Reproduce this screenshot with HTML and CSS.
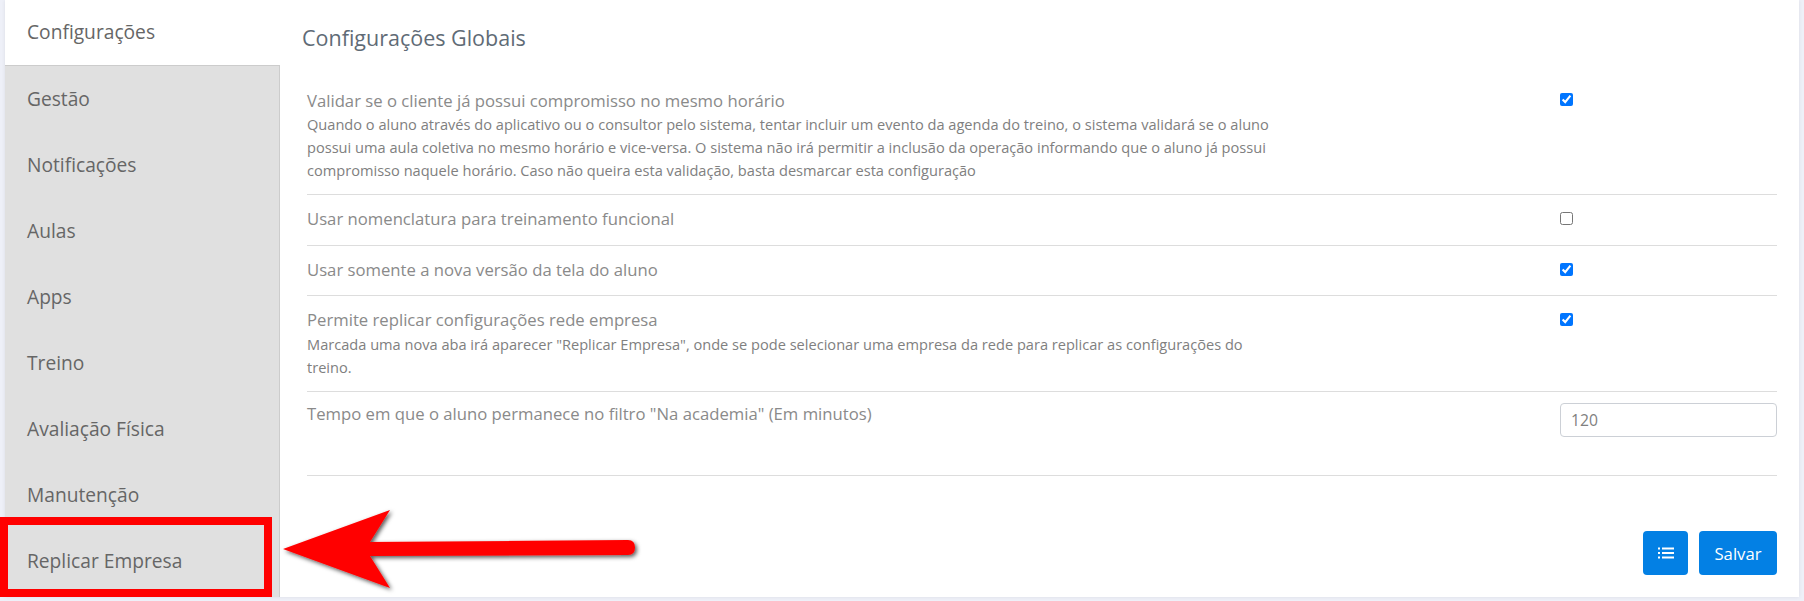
FILE: index.html
```html
<!DOCTYPE html>
<html>
<head>
  <title>Configurações</title>
  <link rel="stylesheet" href="styles.css">
</head>
<body>
  <div class="card">
    <nav class="sidebar">
      <a class="tab active">Configurações</a>
      <a class="tab">Gestão</a>
      <a class="tab">Notificações</a>
      <a class="tab">Aulas</a>
      <a class="tab">Apps</a>
      <a class="tab">Treino</a>
      <a class="tab">Avaliação Física</a>
      <a class="tab">Manutenção</a>
      <a class="tab">Replicar Empresa</a>
    </nav>

    <main class="content">
      <h2 class="title">Configurações Globais</h2>

      <div class="row row-first">
        <div class="row-text">
          <div class="label">Validar se o cliente já possui compromisso no mesmo horário</div>
          <p class="desc">Quando o aluno através do aplicativo ou o consultor pelo sistema, tentar incluir um evento da agenda do treino, o sistema validará se o aluno<br>possui uma aula coletiva no mesmo horário e vice-versa. O sistema não irá permitir a inclusão da operação informando que o aluno já possui<br>compromisso naquele horário. Caso não queira esta validação, basta desmarcar esta configuração</p>
        </div>
        <div class="row-control"><input type="checkbox" checked></div>
      </div>

      <div class="row row-second">
        <div class="row-text">
          <div class="label">Usar nomenclatura para treinamento funcional</div>
        </div>
        <div class="row-control"><input type="checkbox"></div>
      </div>

      <div class="row">
        <div class="row-text">
          <div class="label">Usar somente a nova versão da tela do aluno</div>
        </div>
        <div class="row-control"><input type="checkbox" checked></div>
      </div>

      <div class="row">
        <div class="row-text">
          <div class="label">Permite replicar configurações rede empresa</div>
          <p class="desc">Marcada uma nova aba irá aparecer "Replicar Empresa", onde se pode selecionar uma empresa da rede para replicar as configurações do<br>treino.</p>
        </div>
        <div class="row-control"><input type="checkbox" checked></div>
      </div>

      <div class="row row-last">
        <div class="row-text">
          <div class="label">Tempo em que o aluno permanece no filtro "Na academia" (Em minutos)</div>
        </div>
        <div class="row-control"><input class="number" type="text" value="120"></div>
      </div>

      <div class="actions">
        <button class="btn btn-icon" type="button">
          <svg width="16" height="12" viewBox="0 0 16 12" fill="#fff">
            <rect x="0" y="0.5" width="2" height="2"/>
            <rect x="0" y="5" width="2" height="2"/>
            <rect x="0" y="9.5" width="2" height="2"/>
            <rect x="4" y="0.5" width="12" height="2"/>
            <rect x="4" y="5" width="12" height="2"/>
            <rect x="4" y="9.5" width="12" height="2"/>
          </svg>
        </button>
        <button class="btn btn-save" type="button">Salvar</button>
      </div>
    </main>
  </div>

  <div class="highlight"></div>
  <svg class="arrow" width="370" height="100" viewBox="0 0 370 100">
    <defs>
      <filter id="arrowShadow" x="-5%" y="-10%" width="110%" height="130%">
        <feDropShadow dx="2" dy="2" stdDeviation="2" flood-color="#000" flood-opacity="0.65"/>
      </filter>
    </defs>
    <path filter="url(#arrowShadow)" fill="#f00" d="M3 49 L110 10 L90 42 L348 40 Q355 40 355 47.5 Q355 55 348 55 L90 56 L110 88 Z"/>
  </svg>
</body>
</html>
```

FILE: styles.css
```css
* {
  box-sizing: border-box;
}

body {
  margin: 0;
  height: 601px;
  overflow: hidden;
  background: #eef0f8;
  font-family: 'Open Sans', 'Noto Sans', sans-serif;
}

.card {
  display: flex;
  width: 1794px;
  height: 597px;
  margin-left: 5px;
  background: #fff;
  box-shadow: 0 0 4px rgba(0,0,0,0.08);
}

.sidebar {
  width: 275px;
  flex-shrink: 0;
  display: flex;
  flex-direction: column;
  background: #e0e0e0;
  border-right: 1px solid #ccc;
}

.tab {
  height: 66px;
  padding: 0 0 2px 22px;
  display: flex;
  align-items: center;
  font-size: 19.2px;
  font-weight: 500;
  color: #666;
}

.tab.active {
  background: #fff;
  margin-right: -1px;
  border-bottom: 1px solid #ccc;
}

.content {
  flex: 1;
  padding: 0 22px 22px 27px;
  display: flex;
  flex-direction: column;
}

.title {
  margin: 0 0 0 -5px;
  height: 75px;
  line-height: 75px;
  font-size: 21.5px;
  font-weight: 500;
  color: #5f6b76;
}

.row {
  display: flex;
  justify-content: space-between;
  padding: 13px 0 12px;
  border-bottom: 1px solid #ddd;
}

.row-first {
  padding-top: 14px;
}

.row-second {
  padding-bottom: 13px;
}

.row-last {
  height: 84px;
  padding-top: 11px;
}

.row-text {
  width: 1000px;
}

.label {
  font-size: 16.7px;
  line-height: 22px;
  padding-bottom: 2px;
  color: #8a8a8a;
}

.row-first .label {
  line-height: 24px;
  padding-bottom: 0;
}

.desc {
  margin: 0;
  font-size: 14.6px;
  line-height: 23px;
  color: #808080;
}

.row-control {
  width: 217px;
  padding-top: 4px;
}

.row-control input[type="checkbox"] {
  display: block;
  width: 13px;
  height: 13px;
  margin: 0;
  accent-color: #0075ff;
}

.number {
  width: 217px;
  height: 34px;
  margin-top: -4px;
  padding: 0 10px;
  border: 1px solid #ccd0d6;
  border-radius: 4px;
  font-family: inherit;
  font-size: 15.7px;
  color: #808080;
}

.actions {
  display: flex;
  justify-content: flex-end;
  gap: 11px;
  margin-top: 55px;
}

.btn {
  height: 44px;
  border: none;
  border-radius: 4px;
  background: #0380e4;
  color: #fff;
  font-family: inherit;
  font-size: 16.7px;
}

.btn-icon {
  width: 45px;
  display: flex;
  align-items: center;
  justify-content: center;
}

.btn-save {
  width: 78px;
}

/* red annotation drawn over the screenshot */
.highlight {
  position: absolute;
  left: 0;
  top: 517px;
  width: 272px;
  height: 80px;
  border: 8px solid #f00;
}

.arrow {
  position: absolute;
  left: 280px;
  top: 500px;
}
```
